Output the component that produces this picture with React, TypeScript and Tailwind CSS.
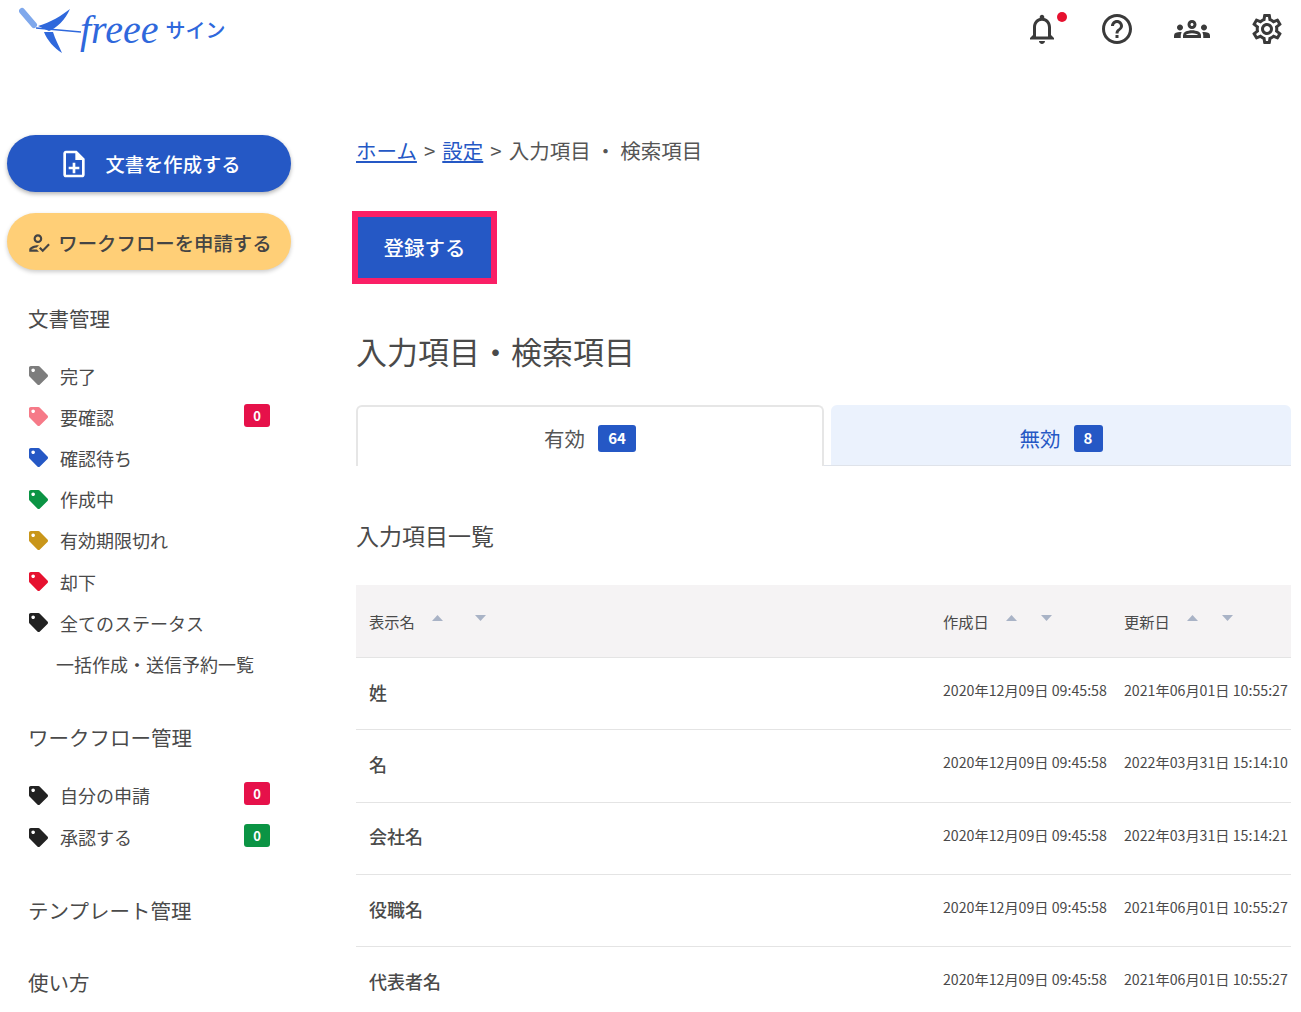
import { FaTag } from "react-icons/fa";
import {
  MdHelpOutline,
  MdOutlineGroups,
  MdOutlineHowToReg,
  MdOutlineNoteAdd,
  MdOutlineNotifications,
  MdOutlineSettings,
} from "react-icons/md";

type StatusItem = {
  label: string;
  color: string;
  badge?: string;
  badgeColor?: string;
};

const statusItems: StatusItem[] = [
  { label: "完了", color: "text-[#7d7d7d]" },
  { label: "要確認", color: "text-[#f67a88]", badge: "0", badgeColor: "bg-[#e6114a]" },
  { label: "確認待ち", color: "text-[#2558c5]" },
  { label: "作成中", color: "text-[#0b9444]" },
  { label: "有効期限切れ", color: "text-[#c9961a]" },
  { label: "却下", color: "text-[#e6112f]" },
  { label: "全てのステータス", color: "text-[#222222]" },
];

const workflowItems: StatusItem[] = [
  { label: "自分の申請", color: "text-[#222222]", badge: "0", badgeColor: "bg-[#e6114a]" },
  { label: "承認する", color: "text-[#222222]", badge: "0", badgeColor: "bg-[#0b9444]" },
];

const rows = [
  { name: "姓", created: "2020年12月09日 09:45:58", updated: "2021年06月01日 10:55:27" },
  { name: "名", created: "2020年12月09日 09:45:58", updated: "2022年03月31日 15:14:10" },
  { name: "会社名", created: "2020年12月09日 09:45:58", updated: "2022年03月31日 15:14:21" },
  { name: "役職名", created: "2020年12月09日 09:45:58", updated: "2021年06月01日 10:55:27" },
  { name: "代表者名", created: "2020年12月09日 09:45:58", updated: "2021年06月01日 10:55:27" },
];

function Logo() {
  return (
    <div className="flex items-center">
      <svg width="62" height="50" viewBox="0 0 62 50" className="shrink-0">
        <path d="M3 6 L15 20" stroke="#7fa8ec" strokeWidth="6" strokeLinecap="round" />
        <path d="M19 21 C32 17 42 11 51 4 C46 15 38 23 30 26 L19 21 Z" fill="#2f68dc" />
        <path d="M25 27 L34 27 C36 34 40 41 43 48 C35 43 28 35 25 27 Z" fill="#2f68dc" />
        <path d="M17 23 L62 27" stroke="#2f68dc" strokeWidth="1.5" />
      </svg>
      <span className="-ml-[1px] font-['Liberation_Serif',serif] text-[40px] italic leading-none text-[#2f68dc]">
        freee
      </span>
      <span className="ml-[7px] text-[20px] font-medium leading-none text-[#2f68dc]">サイン</span>
    </div>
  );
}

function SideRow({ item }: { item: StatusItem }) {
  return (
    <div className="flex h-[41.2px] items-center pl-[22px] pr-[21px]">
      <FaTag className={"mr-[12px] h-[19px] w-[19px] shrink-0 " + item.color} />
      <span className="text-[18px] leading-none text-[#4a4a4a]">{item.label}</span>
      {item.badge ? (
        <span
          className={
            "-mt-[3px] ml-auto flex h-[23px] w-[26px] items-center justify-center rounded-[3px] text-[13px] font-bold text-white " +
            item.badgeColor
          }
        >
          {item.badge}
        </span>
      ) : null}
    </div>
  );
}

function Sidebar() {
  return (
    <aside className="w-[349px] shrink-0 pl-[7px] pr-[58px] pt-[75px]">
      <button className="flex h-[57px] w-full items-center justify-center gap-[16px] rounded-full bg-[#2558c5] pt-[1px] text-[19.3px] font-medium text-white shadow-[0_2px_4px_rgba(0,0,0,0.3)]">
        <MdOutlineNoteAdd className="h-[32px] w-[32px]" />
        文書を作成する
      </button>
      <button className="mt-[21px] flex h-[57px] w-full items-center justify-center gap-[6px] rounded-full bg-[#ffcf77] pt-[2px] text-[19.4px] font-medium text-[#444444] shadow-[0_2px_4px_rgba(0,0,0,0.2)]">
        <MdOutlineHowToReg className="h-[26px] w-[26px]" />
        ワークフローを申請する
      </button>

      <h3 className="mt-[32px] pl-[21px] text-[20.5px] leading-[32px] text-[#4a4a4a]">文書管理</h3>
      <div className="mt-[21px]">
        {statusItems.map((item) => (
          <SideRow key={item.label} item={item} />
        ))}
        <div className="flex h-[41.2px] items-center pl-[49px] text-[18px] leading-none text-[#4a4a4a]">
          一括作成・送信予約一覧
        </div>
      </div>

      <h3 className="mt-[36px] pl-[21px] text-[20.5px] leading-[32px] text-[#4a4a4a]">ワークフロー管理</h3>
      <div className="mt-[22px] flex flex-col gap-[0.8px]">
        {workflowItems.map((item) => (
          <SideRow key={item.label} item={item} />
        ))}
      </div>

      <h3 className="mt-[36px] pl-[21px] text-[20.5px] leading-[32px] text-[#4a4a4a]">テンプレート管理</h3>
      <h3 className="mt-[40px] pl-[21px] text-[20.5px] leading-[32px] text-[#4a4a4a]">使い方</h3>
    </aside>
  );
}

function SortCarets({ gap }: { gap: string }) {
  return (
    <span className={"ml-[17px] flex -translate-y-[3px] items-center " + gap}>
      <svg width="11" height="6" viewBox="0 0 11 6">
        <path d="M5.5 0 L11 6 L0 6 Z" fill="#a9b3c6" />
      </svg>
      <svg width="11" height="6" viewBox="0 0 11 6">
        <path d="M0 0 L11 0 L5.5 6 Z" fill="#a9b3c6" />
      </svg>
    </span>
  );
}

function Table() {
  return (
    <div className="mt-[32px]">
      <div className="grid h-[73px] grid-cols-[574px_181px_1fr] items-center border-b border-[#e4e4e4] bg-[#f5f3f4] pl-[13px] text-[15.3px] text-[#4a4a4a]">
        <div className="flex items-center">
          表示名
          <SortCarets gap="gap-[32px]" />
        </div>
        <div className="flex items-center">
          作成日
          <SortCarets gap="gap-[24px]" />
        </div>
        <div className="flex items-center">
          更新日
          <SortCarets gap="gap-[24px]" />
        </div>
      </div>
      {rows.map((row) => (
        <div
          key={row.name}
          className="grid h-[72.3px] grid-cols-[574px_181px_1fr] items-center border-b border-[#e4e4e4] pl-[13px] text-[#4a4a4a]"
        >
          <div className="pb-[3px] text-[18px] font-medium">{row.name}</div>
          <div className="whitespace-nowrap pb-[6px] text-[14.2px]">{row.created}</div>
          <div className="whitespace-nowrap pb-[6px] text-[14.2px]">{row.updated}</div>
        </div>
      ))}
    </div>
  );
}

export default function App() {
  return (
    <div className="h-[1012px] w-[1301px] overflow-hidden bg-white font-['Noto_Sans_CJK_JP','Noto_Sans',sans-serif] text-[#4a4a4a]">
      <header className="flex h-[60px] items-start justify-between pl-[19px] pr-[16px] pt-[5px]">
        <Logo />
        <div className="flex items-center gap-[39px] pt-[6px]">
          <div className="relative">
            <MdOutlineNotifications className="h-[36px] w-[36px] text-[#3a3a3a]" />
            <span className="absolute -right-[7px] top-[1px] h-[10px] w-[10px] rounded-full bg-[#e6112f]" />
          </div>
          <MdHelpOutline className="h-[36px] w-[36px] text-[#3a3a3a]" />
          <MdOutlineGroups className="h-[36px] w-[36px] text-[#3a3a3a]" />
          <MdOutlineSettings className="h-[36px] w-[36px] text-[#3a3a3a]" />
        </div>
      </header>
      <div className="flex">
        <Sidebar />
        <main className="ml-[7px] w-[935px] pt-[75px]">
          <nav className="flex text-[20.5px] leading-[30px] text-[#555555]">
            <a className="text-[#2558c5] underline">ホーム</a>
            <span className="mx-[7px]">&gt;</span>
            <a className="text-[#2558c5] underline">設定</a>
            <span className="mx-[7px]">&gt;</span>
            <span>入力項目 ・ 検索項目</span>
          </nav>
          <div className="-ml-[4px] mt-[46px] flex h-[73px] w-[145px] items-center justify-center border-[6px] border-[#fa1f66] bg-[#2558c5] text-[20.5px] font-medium text-white">
            登録する
          </div>
          <h1 className="mt-[44px] text-[31px] font-normal leading-[46px] text-[#4a4a4a]">入力項目・検索項目</h1>
          <div className="mt-[31px] flex h-[61px] gap-[7px] border-b border-[#dfe3ea]">
            <div className="-mb-px flex h-[61px] w-[468px] items-center justify-center gap-[13px] rounded-t-[6px] border-x-2 border-t-2 border-[#e6e6e6] bg-white pt-[3px] text-[20.5px] text-[#555555]">
              有効
              <span className="flex h-[27px] w-[38px] items-center justify-center rounded-[3px] bg-[#2558c5] text-[15px] font-bold text-white">64</span>
            </div>
            <div className="flex h-[60px] flex-1 items-center justify-center gap-[13px] rounded-t-[6px] bg-[#ebf2fd] pt-[6px] text-[20.5px] text-[#2558c5]">
              無効
              <span className="flex h-[27px] w-[29px] items-center justify-center rounded-[3px] bg-[#2558c5] text-[15px] font-bold text-white">8</span>
            </div>
          </div>
          <h2 className="mt-[51px] text-[23px] font-normal leading-[36px] text-[#4a4a4a]">入力項目一覧</h2>
          <Table />
        </main>
      </div>
    </div>
  );
}
